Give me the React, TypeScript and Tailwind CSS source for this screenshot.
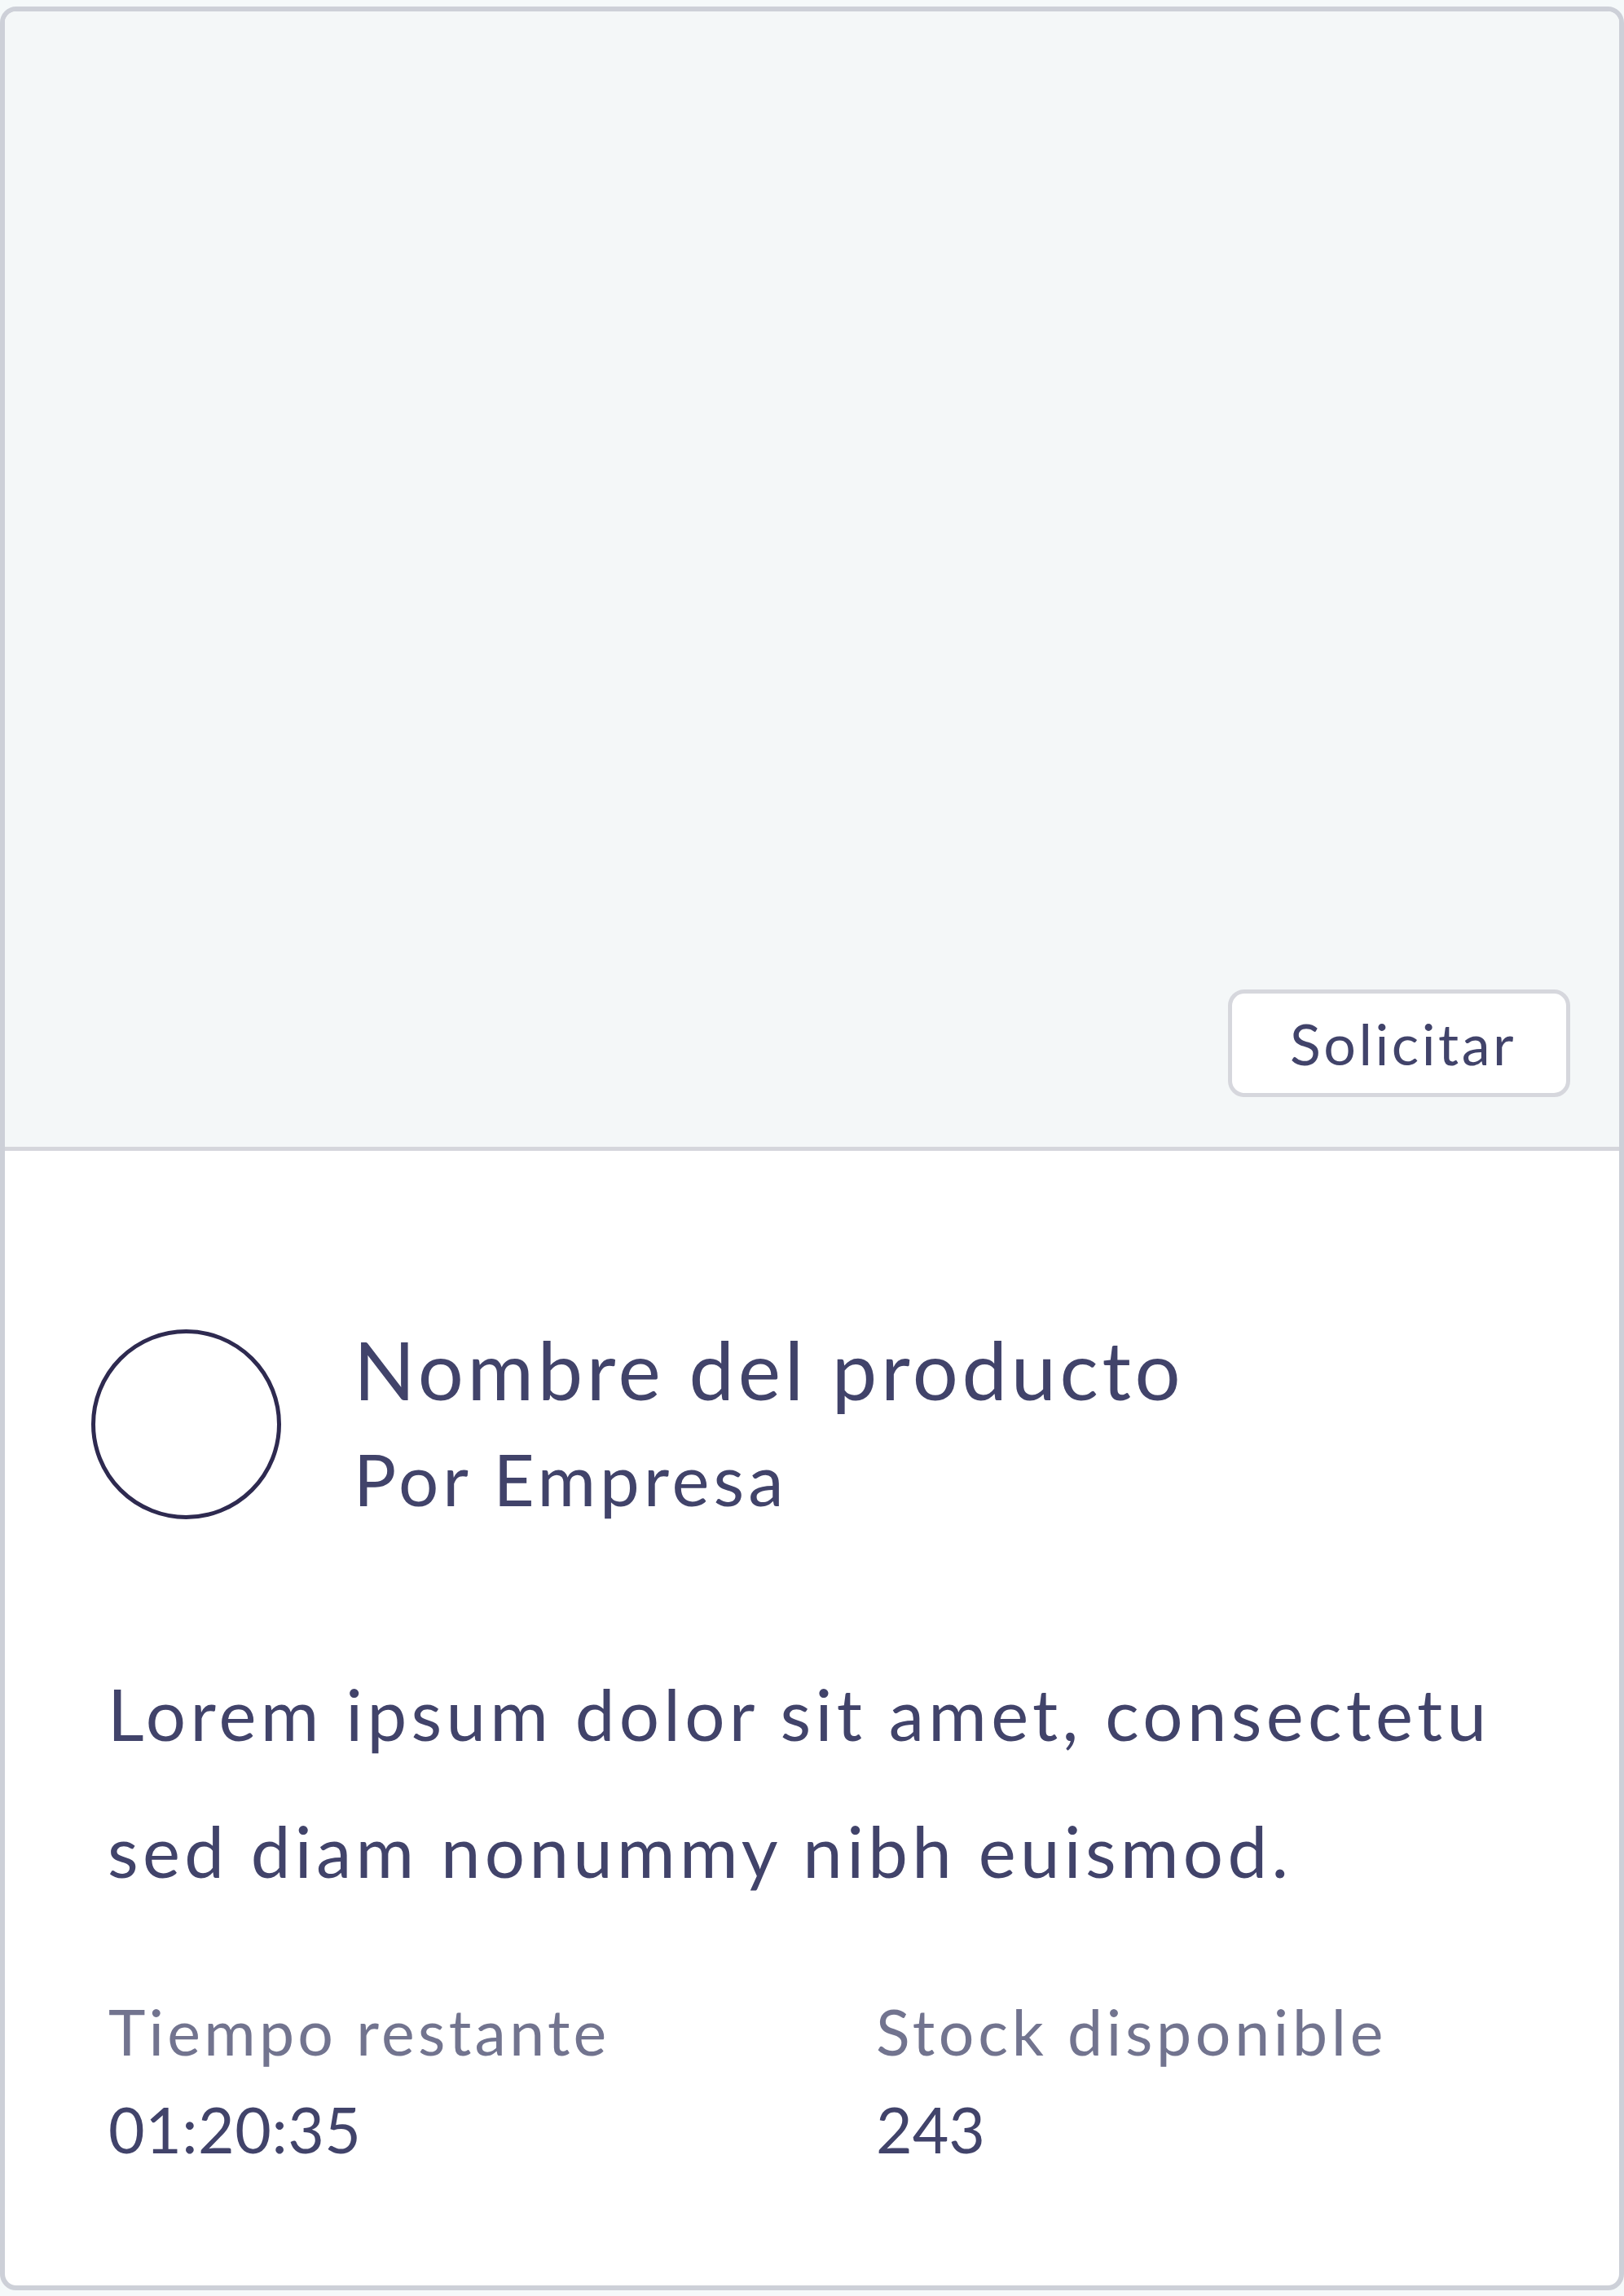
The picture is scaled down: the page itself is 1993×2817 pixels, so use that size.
export default function App() {
  return (
    <main className="min-h-[2817px] bg-[#f5f9fa] pt-[8px] font-['Lato',sans-serif]">
      <div className="h-[2802px] w-[1993px] overflow-hidden rounded-[20px] border-[6px] border-[#cdd0d8] bg-white flex flex-col">
        {/* image area */}
        <div className="h-[1398px] shrink-0 border-b-[5px] border-[#d5d6dc] bg-[#f4f7f8] flex items-end justify-end pr-[60px] pb-[61px]">
          <button className="h-[132px] w-[420px] rounded-[20px] border-[5px] border-[#d6d7dd] bg-white pl-[10px] text-[70px] tracking-[3.5px] text-[#41436a]">
            Solicitar
          </button>
        </div>

        {/* details */}
        <div className="flex flex-col pt-[208px]">
          <div className="flex items-start pl-[106px]">
            <div className="mt-[11px] h-[233px] w-[233px] shrink-0 rounded-full border-[5px] border-[#2e2a50]" />
            <div className="ml-[89px] flex flex-col gap-[24px] text-[#41436a]">
              <h2 className="text-[99px] leading-[119px] tracking-[4.7px]">Nombre del producto</h2>
              <p className="text-[87px] leading-[104px] tracking-[5px]">Por Empresa</p>
            </div>
          </div>

          <p className="mt-[152px] pl-[126px] text-[87px] leading-[168px] tracking-[5.3px] text-[#41436a]">
            Lorem ipsum dolor sit amet, consectetu
            <br />
            sed diam nonummy nibh euismod.
          </p>

          <div className="mt-[91px] flex pl-[127px]">
            <div className="w-[942px]">
              <p className="text-[77px] leading-[92px] tracking-[4.3px] text-[#72748f]">Tiempo restante</p>
              <p className="mt-[28px] text-[77px] leading-[92px] tracking-[0.5px] text-[#41436a]">01:20:35</p>
            </div>
            <div>
              <p className="text-[77px] leading-[92px] tracking-[4.7px] text-[#72748f]">Stock disponible</p>
              <p className="mt-[28px] text-[77px] leading-[92px] text-[#41436a]">243</p>
            </div>
          </div>
        </div>
      </div>
    </main>
  );
}
